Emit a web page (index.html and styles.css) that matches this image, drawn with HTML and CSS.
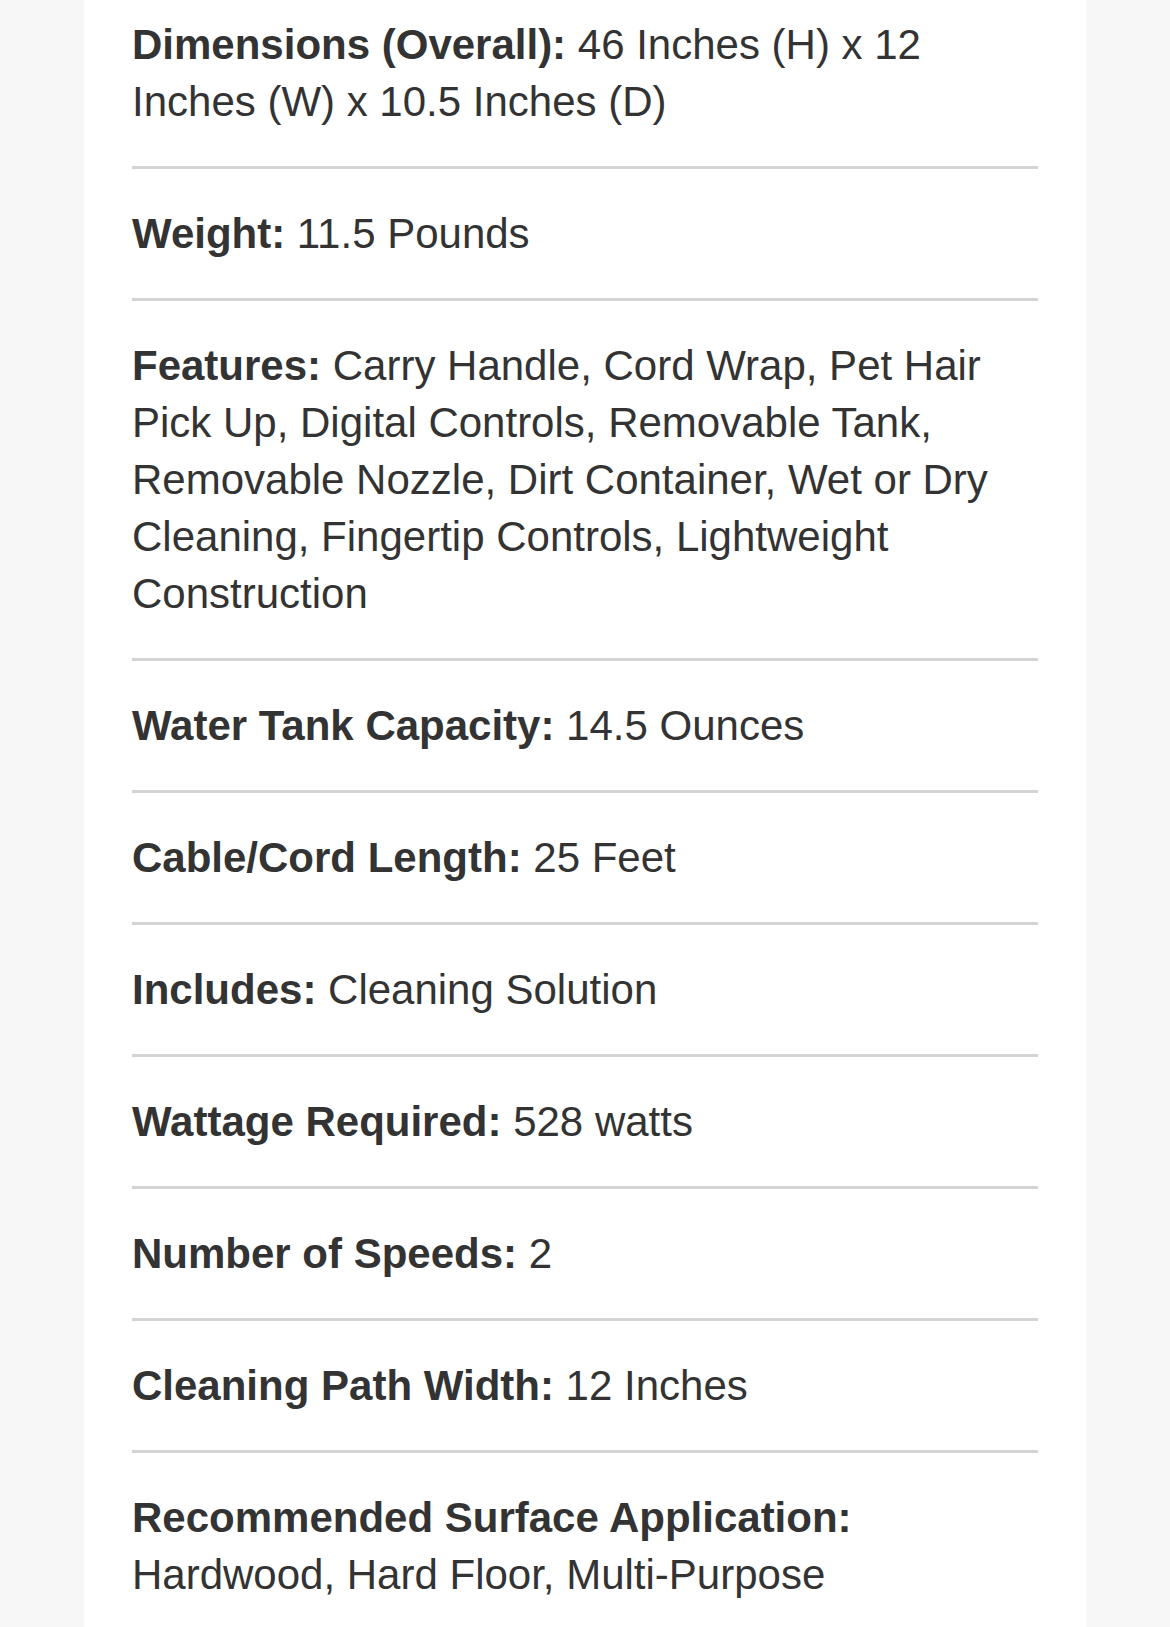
FILE: index.html
```html
<!DOCTYPE html>
<html>
<head>
  <meta name="viewport" content="width=device-width, initial-scale=1.0">
  <title>Specifications</title>
  <link rel="stylesheet" href="styles.css">
</head>
<body>
  <div class="panel">
    <ul class="specs">
      <li class="spec"><strong>Dimensions (Overall):</strong> 46 Inches (H) x 12 Inches (W) x 10.5 Inches (D)</li>
      <li class="spec"><strong>Weight:</strong> 11.5 Pounds</li>
      <li class="spec"><strong>Features:</strong> Carry Handle, Cord Wrap, Pet Hair Pick Up, Digital Controls, Removable Tank, Removable Nozzle, Dirt Container, Wet or Dry Cleaning, Fingertip Controls, Lightweight Construction</li>
      <li class="spec"><strong>Water Tank Capacity:</strong> 14.5 Ounces</li>
      <li class="spec"><strong>Cable/Cord Length:</strong> 25 Feet</li>
      <li class="spec"><strong>Includes:</strong> Cleaning Solution</li>
      <li class="spec"><strong>Wattage Required:</strong> 528 watts</li>
      <li class="spec"><strong>Number of Speeds:</strong> 2</li>
      <li class="spec"><strong>Cleaning Path Width:</strong> 12 Inches</li>
      <li class="spec"><strong>Recommended Surface Application:</strong> Hardwood, Hard Floor, Multi-Purpose</li>
    </ul>
  </div>
</body>
</html>
```
FILE: styles.css
```css
body {
  margin: 0;
  background: #f7f7f7;
  color: #333;
  font-family: "Liberation Sans", Arial, sans-serif;
}
.panel {
  background: white;
  margin: 0 84px;
  padding: 0 48px;
  min-height: 100vh;
  overflow: hidden;
}
.specs {
  list-style: none;
  margin: 0;
  padding: 0;
}
.spec {
  font-size: 42px;
  line-height: 57px;
  padding: 36px 0;
  border-bottom: 3px solid #d4d4d4;
}
.spec:first-child {
  padding-top: 16px;
}
.spec:last-child {
  border-bottom: none;
}
.spec strong {
  font-weight: bold;
}
```
